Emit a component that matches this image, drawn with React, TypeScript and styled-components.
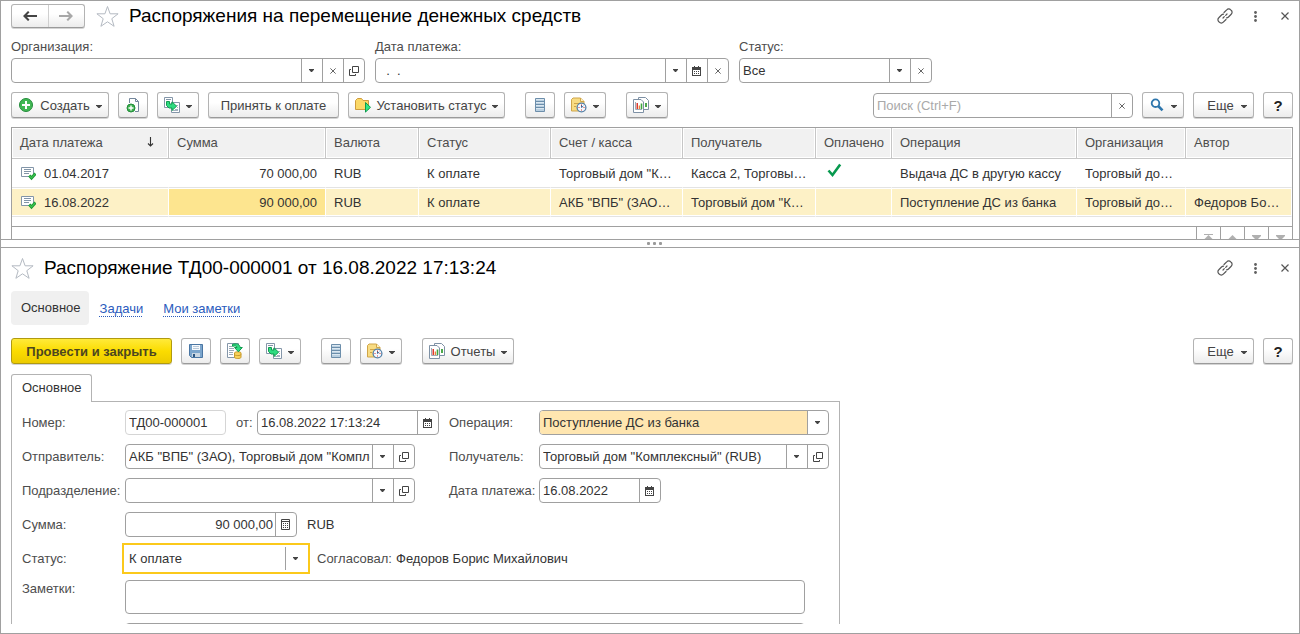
import React from "react";
import styled, { createGlobalStyle, css } from "styled-components";

const color = {
  line: "#a0a0a0",
  lineLight: "#d5d5d5",
  label: "#4d4d4d",
  text: "#333333",
  head: "#f1f1f1",
  select: "#fdf1c6",
  selectCell: "#fde58f",
  focus: "#fbc91b",
  link: "#2a5bbd",
};

const GlobalStyle = createGlobalStyle`
  *, *::before, *::after { box-sizing: border-box; }
  body { margin: 0; background: #fff; }
  body, button, input, select, textarea {
    font-family: "Liberation Sans", Arial, sans-serif;
    font-size: 13px;
    color: ${color.text};
  }
  svg { display: block; flex: none; }
`;

/* ---------- layout ---------- */

const Window = styled.div`
  display: flex;
  flex-direction: column;
  height: 100vh;
  border: 1px solid ${color.line};
  overflow: hidden;
`;

const ListPane = styled.section`
  padding: 3px 6px 0 10px;
  border-bottom: 1px solid ${color.line};
`;

const Splitter = styled.div`
  display: flex;
  align-items: center;
  justify-content: center;
  gap: 3px;
  height: 7px;
  padding-left: 9px;
  flex: none;
`;

const SplitterDot = styled.span`
  width: 3px;
  height: 3px;
  border-radius: 1px;
  background: #9a9a9a;
`;

const FormPane = styled.section`
  display: flex;
  flex-direction: column;
  flex: 1;
  min-height: 0;
  padding: 8px 6px 9px 10px;
  border-top: 1px solid ${color.line};
`;

const TitleRow = styled.header`
  display: flex;
  align-items: center;
  height: 24px;
  flex: none;
`;

const Title = styled.h1`
  flex: 1;
  margin: 0 0 0 10px;
  font-size: 19px;
  line-height: 26px;
  font-weight: 400;
  color: #000;
  white-space: nowrap;
`;

const TitleActions = styled.div`
  display: flex;
  gap: 14px;
`;

const PlainButton = styled.button`
  display: flex;
  align-items: center;
  justify-content: center;
  padding: 0;
  border: 0;
  background: none;
`;

const ActionButton = styled(PlainButton)`
  width: 16px;
  height: 16px;
`;

/* ---------- buttons ---------- */

const raised = css`
  border: 1px solid #b3b3b3;
  border-bottom-color: #9a9a9a;
  border-radius: 3px;
  background: linear-gradient(#ffffff 40%, #ececec);
  box-shadow: 0 1px 0 #d4d4d4;
`;

const NavButtons = styled.div`
  display: flex;
  width: 74px;
  height: 24px;
  margin-right: 11px;
  ${raised}
`;

const NavButton = styled(PlainButton)`
  flex: 1;
  & + & { border-left: 1px solid #cfcfcf; }
`;

const Toolbar = styled.div`
  display: flex;
  align-items: center;
  gap: 9px;
  height: 26px;
  flex: none;
`;

const Group = styled.div<{ $end?: boolean }>`
  display: flex;
  align-items: flex-end;
  gap: 9px;
  margin-right: ${(p) => (p.$end ? "0" : "11px")};
  margin-left: ${(p) => (p.$end ? "auto" : "0")};
`;

const ToolButton = styled.button<{ $width: number }>`
  display: flex;
  align-items: center;
  justify-content: space-between;
  width: ${(p) => p.$width}px;
  height: 26px;
  padding: 0 6px;
  font-size: 13px;
  color: #444;
  white-space: nowrap;
  ${raised}
`;

const ButtonText = styled.span`
  flex: 1;
  text-align: center;
`;

const PrimaryButton = styled(ToolButton)`
  border-color: #b09a10;
  background: linear-gradient(#ffea3a, #fbdc00 50%, #eccb00);
  font-weight: 700;
  color: #4c4620;
`;

const HelpButton = styled(ToolButton)`
  justify-content: center;
  font-size: 15px;
  font-weight: 700;
  color: #222;
`;

/* ---------- fields ---------- */

type FieldProps = { $width?: number; $tone?: "locked" | "filled" | "focused" };

const Field = styled.div<FieldProps>`
  display: flex;
  width: ${(p) => p.$width ?? 290}px;
  height: 25px;
  flex: none;
  border: 1px solid ${color.line};
  border-radius: 4px;
  background: #fff;
  ${(p) => p.$tone === "locked" && css`border-color: ${color.lineLight};`}
  ${(p) =>
    p.$tone === "focused" &&
    css`
      border-color: #fff;
      border-radius: 0;
      outline: 2px solid ${color.focus};
      outline-offset: 1px;
    `}
  ${(p) =>
    p.$tone === "filled" &&
    css`
      & > select { background: #ffe6b0; border-radius: 3px 0 0 3px; }
    `}
`;

const control = css`
  flex: 1;
  width: 0;
  min-width: 0;
  margin: 0;
  padding: 0 2px 0 3px;
  border: 0;
  outline: 0;
  background: none;
  color: ${color.text};
`;

const Input = styled.input<{ $right?: boolean }>`
  ${control}
  text-align: ${(p) => (p.$right ? "right" : "left")};
  &::placeholder { color: #a9a9a9; opacity: 1; }
`;

const Select = styled.select`
  ${control}
  appearance: none;
`;

const FieldButton = styled(PlainButton)`
  width: 21px;
  border-left: 1px solid ${color.line};
`;

const Filters = styled.div`
  display: flex;
  gap: 10px;
  margin: 9px 0;
`;

const Filter = styled.div`
  display: flex;
  flex-direction: column;
  gap: 1px;
`;

const Label = styled.label`
  line-height: 20px;
  color: ${color.label};
  white-space: nowrap;
`;

/* ---------- list ---------- */

const ListBox = styled.div`
  margin-top: 9px;
  border: 1px solid ${color.line};
  border-bottom: 0;
`;

const Table = styled.table`
  width: 100%;
  table-layout: fixed;
  border-collapse: separate;
  border-spacing: 0;
`;

const cell = css`
  padding: 0 8px;
  overflow: hidden;
  text-overflow: ellipsis;
  white-space: nowrap;
`;

const HeadCell = styled.th`
  ${cell}
  height: 31px;
  padding: 0 4px 2px 8px;
  border-right: 1px solid #c6c6c6;
  border-bottom: 1px solid #c6c6c6;
  background: ${color.head};
  box-shadow: inset 0 0 0 1px #fff;
  font-weight: 400;
  text-align: left;
  color: ${color.label};
  &:last-child { border-right: 0; }
`;

const SortHead = styled.span`
  display: flex;
  align-items: center;
  justify-content: space-between;
  padding-right: 10px;
`;

const Row = styled.tr<{ $selected?: boolean }>`
  background: ${(p) => (p.$selected ? color.select : "#fff")};
`;

const Cell = styled.td<{ $right?: boolean; $current?: boolean }>`
  ${cell}
  height: 29px;
  border-right: 1px solid #fff;
  border-bottom: 1px solid #e3e3e3;
  box-shadow: inset 0 1px #fff, inset 0 -1px #fff;
  text-align: ${(p) => (p.$right ? "right" : "left")};
  background: ${(p) => (p.$current ? color.selectCell : "none")};
`;

const DateCell = styled.span`
  display: flex;
  align-items: center;
  gap: 8px;
`;

const PaidMark = styled.span`
  display: block;
  padding-bottom: 6px;
`;

const ListSpace = styled.div`
  height: 10px;
  border-bottom: 1px solid ${color.line};
`;

const ListFooter = styled.div`
  display: flex;
  justify-content: flex-end;
  height: 12px;
  overflow: hidden;
`;

const ScrollButton = styled(PlainButton)`
  width: 24px;
  height: 24px;
  border-left: 1px solid ${color.line};
`;

/* ---------- form ---------- */

const Tabs = styled.nav`
  display: flex;
  align-items: center;
  gap: 20px;
  margin: 11px 0 13px;
  flex: none;
`;

const CurrentSection = styled.span`
  height: 34px;
  margin-right: -9px;
  padding: 0 8px 0 10px;
  border-radius: 4px;
  background: #f0f0f0;
  line-height: 34px;
`;

const SectionLink = styled.a`
  color: ${color.link};
  text-decoration: underline dotted 1px;
  text-underline-offset: 3px;
`;

const PageTab = styled.div`
  position: relative;
  align-self: flex-start;
  z-index: 1;
  height: 28px;
  margin: 10px 0 -1px;
  padding: 0 9px 0 10px;
  border: 1px solid #b3b3b3;
  border-bottom: 0;
  border-radius: 3px 3px 0 0;
  background: #fff;
  line-height: 26px;
  flex: none;
`;

const Page = styled.form`
  display: flex;
  flex-direction: column;
  gap: 9px;
  flex: 1;
  min-height: 0;
  max-width: 829px;
  padding: 8px 10px 0;
  border: 1px solid #b3b3b3;
  border-bottom: 0;
  overflow: hidden;
`;

const FormRow = styled.div`
  display: flex;
  flex: none;
`;

const FormLabel = styled(Label)<{ $width?: number }>`
  width: ${(p) => p.$width ?? 103}px;
  line-height: 25px;
  flex: none;
`;

const NotesLabel = styled(FormLabel)`
  line-height: 18px;
`;

const FirstColumn = styled.div`
  display: flex;
  width: 324px;
  gap: 10px;
  flex: none;
`;

const Note = styled.span`
  line-height: 25px;
  white-space: nowrap;
`;

const Notes = styled.textarea`
  width: 680px;
  height: 34px;
  padding: 3px;
  border: 1px solid ${color.line};
  border-radius: 4px;
  resize: none;
`;

/* ---------- icons ---------- */

const Caret = ({ small }: { small?: boolean }) =>
  small ? (
    <svg width="6" height="3" viewBox="0 0 6 3"><path d="M0 0h5v.8L3 3H2L0 .8z" fill="#444" /></svg>
  ) : (
    <svg width="6" height="5" viewBox="0 0 6 5"><path d="M0 2h6v.6L3.600 5H2.400L0 2.600z" fill="#444" /></svg>
  );

const Cross = ({ size = 6 }: { size?: number }) => (
  <svg width={size} height={size} viewBox="0 0 8 8">
    <path d="M.5 .5l7 7M7.500 .5l-7 7" stroke="#555" strokeWidth="1.200" fill="none" />
  </svg>
);

const OpenIcon = () => (
  <svg width="10" height="10" viewBox="0 0 10 10" fill="none" stroke="#444">
    <path d="M3.500 .5h6v6h-6zM2 3.500H.5v6h6V8" />
  </svg>
);

const CalendarIcon = () => (
  <svg width="10" height="10" viewBox="0 0 10 10">
    <path d="M0 1h2V0h1v1h3V0h1v1h2v9H0z" fill="#444" />
    <path d="M1 4h7v5H1z" fill="#fff" />
    <path d="M2 5h1v1H2zM4 5h1v1H4zM6 5h1v1H6zM2 7h1v1H2zM4 7h1v1H4zM6 7h1v1H6z" fill="#444" />
  </svg>
);

const CalculatorIcon = () => (
  <svg width="10" height="11" viewBox="0 0 10 11">
    <path d="M.5 .5h8v10h-8z" fill="#fff" stroke="#444" />
    <path d="M1 2h7v1H1zM2 4h1v1H2zM4 4h1v1H4zM6 4h1v1H6zM2 6h1v1H2zM4 6h1v1H4zM6 6h1v1H6zM2 8h1v1H2zM4 8h1v1H4zM6 8h1v1H6z" fill="#444" />
  </svg>
);

const Arrow = ({ forward }: { forward?: boolean }) => (
  <svg width="14" height="12" viewBox="0 0 14 12">
    {forward ? (
      <path d="M0 5h10L7.500 2.200 9 1l5 5-5 5-1.500-1.200L10 7H0z" fill="#a8a8a8" />
    ) : (
      <path d="M14 5H4l2.500-2.800L5 1 0 6l5 5 1.500-1.200L4 7h10z" fill="#444" />
    )}
  </svg>
);

const Star = () => (
  <svg width="23" height="23" viewBox="0 0 23 23" fill="none" stroke="#b4bac2">
    <path d="M11.500 1.500l2.600 7.300h8l-6.300 4.900 2.300 7.600-6.600-4.500-6.600 4.500 2.300-7.600L.9 8.800h8z" />
  </svg>
);

const LinkIcon = () => (
  <svg width="16" height="16" viewBox="0 0 16 16" fill="none" stroke="#555" strokeWidth="1.200" strokeLinecap="round">
    <path d="M7 4.500l2.700-2.700a2.700 2.700 0 0 1 4 0l.5.5a2.700 2.700 0 0 1 0 4l-2.700 2.700a2.700 2.700 0 0 1-2 .8" />
    <path d="M9 11.500l-2.700 2.700a2.700 2.700 0 0 1-4 0l-.5-.5a2.700 2.700 0 0 1 0-4L4.500 7a2.700 2.700 0 0 1 2-.8M6 10l1.300-1.300M8.700 7.300L10 6" />
  </svg>
);

const DotsIcon = () => (
  <svg width="3" height="11" viewBox="0 0 3 11" fill="#606060">
    <circle cx="1.500" cy="1.500" r="1.400" />
    <circle cx="1.500" cy="5.500" r="1.400" />
    <circle cx="1.500" cy="9.500" r="1.400" />
  </svg>
);

const CreateIcon = () => (
  <svg width="16" height="16" viewBox="0 0 16 16">
    <circle cx="8" cy="8" r="6.500" fill="#41b854" stroke="#238c3b" />
    <path d="M8 4v8M4 8h8" stroke="#fff" strokeWidth="2" />
  </svg>
);

const CopyIcon = () => (
  <svg width="16" height="16" viewBox="0 0 16 16">
    <path d="M4.500 1.500h6l3 3v10h-9z" fill="#fff" />
    <path d="M4.500 6V1.500h6l3 3v10H10M10.500 1.500v3h3" fill="none" stroke="#74879c" />
    <circle cx="6" cy="11" r="4" fill="#3cb14d" stroke="#238c3b" />
    <path d="M6 8.500v5M3.500 11h5" stroke="#fff" strokeWidth="1.400" />
  </svg>
);

const BasedOnIcon = () => (
  <svg width="16" height="16" viewBox="0 0 16 16">
    <path d="M.5 .5h8v10h-8z" fill="#fff" stroke="#8496a9" />
    <path d="M2 2.500h5" stroke="#8496a9" />
    <path d="M7.500 5.500h8v10h-8z" fill="#fff" stroke="#8496a9" />
    <path d="M12 8.500h2M13 10.500h1M11 12.500h3M9 13.500h5" stroke="#a3b1bf" />
    <path d="M2.500 4.500h3v2.500H8V4.800l4.600 4.400L8 13.500v-2.500H5L2.500 8.500z" fill="#2ddb80" stroke="#139c50" strokeLinejoin="round" />
  </svg>
);

const StatusIcon = () => (
  <svg width="16" height="16" viewBox="0 0 16 16">
    <path d="M.5 12.500v-9l2-2h4l1.500 2h5.500v9z" fill="#fbd866" stroke="#cf9c3c" strokeLinejoin="round" />
    <path d="M10.500 5.500l5 4.800-5 4.800z" fill="#2ee685" stroke="#0e9a4d" strokeLinejoin="round" />
  </svg>
);

const ListIcon = () => (
  <svg width="10" height="14" viewBox="0 0 10 14">
    <path d="M.5 .5h9v13h-9z" fill="#b9cfe0" stroke="#6c8eab" />
    <path d="M1 3.500h8M1 6.500h8M1 9.500h8" stroke="#6c8eab" />
    <path d="M1 1.500h8M1 4.500h8M1 7.500h8M1 10.500h8" stroke="#dce8f1" />
  </svg>
);

const ReminderIcon = () => (
  <svg width="16" height="16" viewBox="0 0 16 16">
    <path d="M.5 2.500l1.500-1.500h7.500l3.500 3.500v9.500H.5z" fill="#f8dc83" stroke="#cfa548" strokeLinejoin="round" />
    <path d="M9.500 1v3.500H13" fill="#fff3c4" stroke="#cfa548" strokeLinejoin="round" />
    <path d="M3 6.500h5M3 9.500h2" stroke="#cfa548" />
    <circle cx="10.500" cy="10.500" r="4.400" fill="#f5faff" stroke="#5580a8" strokeWidth="1.300" />
    <path d="M10.500 10.500V8M10.500 10.500l1.800-1.500" stroke="#3e6c98" />
    <path d="M7.500 10h1v1h-1zM12.500 10h1v1h-1zM10 12.500h1v1h-1zM10 7.500h1v1h-1z" fill="#d8322c" />
  </svg>
);

const ReportIcon = () => (
  <svg width="16" height="16" viewBox="0 0 16 16">
    <path d="M5.500 .5h7l3 3v9h-10z" fill="#fff" stroke="#7e91a5" />
    <path d="M12 6h2v4h-2z" fill="#4ba84a" />
    <path d="M.5 2.500h7.500l2.500 2.500v10.500H.5z" fill="#fff" stroke="#7e91a5" />
    <path d="M2.500 5v7.500H9" fill="none" stroke="#9dabb9" />
    <path d="M3.500 6H5v6H3.500z" fill="#dc3a30" />
    <path d="M5.700 8.500h1.300V12H5.700z" fill="#e8843c" />
    <path d="M7.700 6.500h1.600V12H7.700z" fill="#3fa63f" />
  </svg>
);

const SearchIcon = () => (
  <svg width="16" height="16" viewBox="0 0 16 16" fill="none" stroke="#2d76ad">
    <circle cx="6.500" cy="6.200" r="3.800" strokeWidth="1.800" />
    <path d="M9.200 9l4.300 4.300" strokeWidth="2.600" />
  </svg>
);

const SaveIcon = () => (
  <svg width="14" height="14" viewBox="0 0 14 14">
    <path d="M.5 .5h13v13h-11l-2-2z" fill="#7ba5cc" stroke="#4a76a3" />
    <path d="M3 1h8v5H3z" fill="#f6f9fc" />
    <path d="M4 2.500h6M4 4.500h6" stroke="#b8c8d8" />
    <path d="M3 9h8v4H3z" fill="#c9d6e2" />
    <path d="M4 10h2v3H4z" fill="#2c5580" />
  </svg>
);

const PostIcon = () => (
  <svg width="16" height="16" viewBox="0 0 16 16">
    <path d="M.5 .5h11v14H.5z" fill="#fff" stroke="#8496a9" />
    <path d="M2 3.500h3M2 5.500h5M2 7.500h5M2 9.500h4M2 11.500h4" stroke="#9aa9b8" />
    <path d="M7.500 10c0-1.600 6.500-1.600 6.500 0v4.300c0 1.600-6.500 1.600-6.500 0z" fill="#f9d25a" stroke="#c79a2d" />
    <path d="M7.500 11.500c0 1.400 6.500 1.400 6.500 0" fill="none" stroke="#c79a2d" />
    <path d="M5.500 1.300C9.500 .3 12.800 1 13 4.500h2.300l-3.900 4.300L7.500 4.500H10c0-1.400-1.600-1.900-4.500-1.200z" fill="#2edc80" stroke="#0e9a4d" strokeLinejoin="round" />
  </svg>
);

const PostedIcon = () => (
  <svg width="16" height="16" viewBox="0 0 16 16">
    <path d="M1.500 2.500h12v9h-12z" fill="#fff" stroke="#8295a8" />
    <path d="M4 4.500h7M4 6.500h7M4 8.500h5" stroke="#8295a8" />
    <path d="M9.300 10.500l2.200 2.500 4-4.500" fill="none" stroke="#1b9a35" strokeWidth="3" />
    <path d="M9.500 10.800l2 2 3.600-4" fill="none" stroke="#3fc450" strokeWidth="1.200" />
  </svg>
);

const PaidIcon = () => (
  <svg width="18" height="18" viewBox="0 0 18 18">
    <path d="M4.500 9.500l4 4.500 7.700-10.500" fill="none" stroke="#07994e" strokeWidth="2.600" />
  </svg>
);

const SortIcon = () => (
  <svg width="7" height="10" viewBox="0 0 7 10" fill="none" stroke="#333">
    <path d="M3.500 0v9M1 6.500l2.500 2.500L6 6.500" strokeWidth="1.100" />
  </svg>
);

const ScrollIcon = ({ up, edge }: { up?: boolean; edge?: boolean }) => (
  <svg width="11" height="10" viewBox="0 0 11 10" fill="#b0b0b0">
    {edge && up && <path d="M1 0h9v1H1z" />}
    {up ? <path d="M5.500 1l5 5h-10z" /> : <path d="M1 1h9v1L5.500 6.500 1 2z" />}
    {edge && !up && <path d="M1 8h9v1H1z" />}
  </svg>
);

/* ---------- parts ---------- */

const WindowActions = () => (
  <TitleActions>
    <ActionButton aria-label="Получить ссылку"><LinkIcon /></ActionButton>
    <ActionButton aria-label="Меню"><DotsIcon /></ActionButton>
    <ActionButton aria-label="Закрыть"><Cross size={8} /></ActionButton>
  </TitleActions>
);

const DropButton = () => <FieldButton type="button" aria-label="Выбрать из списка"><Caret small /></FieldButton>;
const ClearButton = () => <FieldButton type="button" aria-label="Очистить"><Cross /></FieldButton>;
const OpenButton = () => <FieldButton type="button" aria-label="Открыть"><OpenIcon /></FieldButton>;
const CalendarButton = () => <FieldButton type="button" aria-label="Календарь"><CalendarIcon /></FieldButton>;

const columns: [string, number?][] = [
  ["Дата платежа", 157],
  ["Сумма", 157],
  ["Валюта", 93],
  ["Статус", 132],
  ["Счет / касса", 132],
  ["Получатель", 133],
  ["Оплачено", 76],
  ["Операция", 185],
  ["Организация", 109],
  ["Автор"],
];

const orders = [
  {
    date: "01.04.2017", sum: "70 000,00", currency: "RUB", status: "К оплате",
    account: 'Торговый дом "К…', receiver: "Касса 2, Торговы…", paid: true,
    operation: "Выдача ДС в другую кассу", company: "Торговый до…", author: "",
  },
  {
    date: "16.08.2022", sum: "90 000,00", currency: "RUB", status: "К оплате",
    account: 'АКБ "ВПБ" (ЗАО…', receiver: 'Торговый дом "К…', paid: false,
    operation: "Поступление ДС из банка", company: "Торговый до…", author: "Федоров Бо…",
    selected: true,
  },
];

const OrderTable = () => (
  <Table>
    <colgroup>
      {columns.map(([name, width]) => <col key={name} width={width} />)}
    </colgroup>
    <thead>
      <tr>
        {columns.map(([name], i) => (
          <HeadCell key={name} scope="col">
            {i === 0 ? <SortHead>{name}<SortIcon /></SortHead> : name}
          </HeadCell>
        ))}
      </tr>
    </thead>
    <tbody>
      {orders.map((o) => (
        <Row key={o.date} $selected={o.selected}>
          <Cell><DateCell><PostedIcon />{o.date}</DateCell></Cell>
          <Cell $right $current={o.selected}>{o.sum}</Cell>
          <Cell>{o.currency}</Cell>
          <Cell>{o.status}</Cell>
          <Cell>{o.account}</Cell>
          <Cell>{o.receiver}</Cell>
          <Cell>{o.paid && <PaidMark><PaidIcon /></PaidMark>}</Cell>
          <Cell>{o.operation}</Cell>
          <Cell>{o.company}</Cell>
          <Cell>{o.author}</Cell>
        </Row>
      ))}
    </tbody>
  </Table>
);

const OrderList = () => (
  <ListPane>
    <TitleRow>
      <NavButtons>
        <NavButton aria-label="Назад"><Arrow /></NavButton>
        <NavButton aria-label="Вперед"><Arrow forward /></NavButton>
      </NavButtons>
      <PlainButton aria-label="В избранное"><Star /></PlainButton>
      <Title>Распоряжения на перемещение денежных средств</Title>
      <WindowActions />
    </TitleRow>

    <Filters>
      <Filter>
        <Label htmlFor="f-company">Организация:</Label>
        <Field $width={354}>
          <Input id="f-company" />
          <DropButton /><ClearButton /><OpenButton />
        </Field>
      </Filter>
      <Filter>
        <Label htmlFor="f-date">Дата платежа:</Label>
        <Field $width={354}>
          <Input id="f-date" defaultValue="  .  .    " />
          <DropButton /><CalendarButton /><ClearButton />
        </Field>
      </Filter>
      <Filter>
        <Label htmlFor="f-status">Статус:</Label>
        <Field $width={193}>
          <Select id="f-status"><option>Все</option></Select>
          <DropButton /><ClearButton />
        </Field>
      </Filter>
    </Filters>

    <Toolbar>
      <Group>
        <ToolButton $width={98}><CreateIcon /><ButtonText>Создать</ButtonText><Caret /></ToolButton>
        <HelpButton $width={30} aria-label="Скопировать"><CopyIcon /></HelpButton>
        <ToolButton $width={42} aria-label="Создать на основании"><BasedOnIcon /><Caret /></ToolButton>
        <ToolButton $width={131}><ButtonText>Принять к оплате</ButtonText></ToolButton>
        <ToolButton $width={157}><StatusIcon /><ButtonText>Установить статус</ButtonText><Caret /></ToolButton>
      </Group>
      <Group>
        <HelpButton $width={30} aria-label="Реестр"><ListIcon /></HelpButton>
        <ToolButton $width={42} aria-label="Напоминания"><ReminderIcon /><Caret /></ToolButton>
      </Group>
      <ToolButton $width={42} aria-label="Отчеты"><ReportIcon /><Caret /></ToolButton>
      <Group $end>
        <Field $width={260}>
          <Input placeholder="Поиск (Ctrl+F)" aria-label="Поиск" />
          <ClearButton />
        </Field>
        <ToolButton $width={42} aria-label="Найти"><SearchIcon /><Caret /></ToolButton>
        <ToolButton $width={61}><ButtonText>Еще</ButtonText><Caret /></ToolButton>
        <HelpButton $width={30}>?</HelpButton>
      </Group>
    </Toolbar>

    <ListBox>
      <OrderTable />
      <ListSpace />
      <ListFooter>
        <ScrollButton aria-label="В начало"><ScrollIcon up edge /></ScrollButton>
        <ScrollButton aria-label="Вверх"><ScrollIcon up /></ScrollButton>
        <ScrollButton aria-label="Вниз"><ScrollIcon /></ScrollButton>
        <ScrollButton aria-label="В конец"><ScrollIcon edge /></ScrollButton>
      </ListFooter>
    </ListBox>
  </ListPane>
);

const OrderForm = () => (
  <FormPane>
    <TitleRow>
      <PlainButton aria-label="В избранное"><Star /></PlainButton>
      <Title as="h2">Распоряжение ТД00-000001 от 16.08.2022 17:13:24</Title>
      <WindowActions />
    </TitleRow>

    <Tabs>
      <CurrentSection>Основное</CurrentSection>
      <SectionLink href="#tasks">Задачи</SectionLink>
      <SectionLink href="#notes">Мои заметки</SectionLink>
    </Tabs>

    <Toolbar>
      <Group>
        <PrimaryButton $width={161}><ButtonText>Провести и закрыть</ButtonText></PrimaryButton>
        <HelpButton $width={30} aria-label="Записать"><SaveIcon /></HelpButton>
        <HelpButton $width={30} aria-label="Провести"><PostIcon /></HelpButton>
        <ToolButton $width={42} aria-label="Создать на основании"><BasedOnIcon /><Caret /></ToolButton>
      </Group>
      <Group>
        <HelpButton $width={30} aria-label="Реестр"><ListIcon /></HelpButton>
        <ToolButton $width={42} aria-label="Напоминания"><ReminderIcon /><Caret /></ToolButton>
      </Group>
      <ToolButton $width={92}><ReportIcon /><ButtonText>Отчеты</ButtonText><Caret /></ToolButton>
      <Group $end>
        <ToolButton $width={61}><ButtonText>Еще</ButtonText><Caret /></ToolButton>
        <HelpButton $width={30}>?</HelpButton>
      </Group>
    </Toolbar>

    <PageTab>Основное</PageTab>
    <Page>
      <FormRow>
        <FormLabel htmlFor="number">Номер:</FormLabel>
        <FirstColumn>
          <Field $width={101} $tone="locked"><Input id="number" defaultValue="ТД00-000001" /></Field>
          <FormLabel htmlFor="date" $width={11}>от:</FormLabel>
          <Field $width={182}><Input id="date" defaultValue="16.08.2022 17:13:24" /><CalendarButton /></Field>
        </FirstColumn>
        <FormLabel htmlFor="operation" $width={90}>Операция:</FormLabel>
        <Field $tone="filled">
          <Select id="operation"><option>Поступление ДС из банка</option></Select>
          <DropButton />
        </Field>
      </FormRow>

      <FormRow>
        <FormLabel htmlFor="sender">Отправитель:</FormLabel>
        <FirstColumn>
          <Field>
            <Input id="sender" defaultValue={'АКБ "ВПБ" (ЗАО), Торговый дом "Комплексный"'} />
            <DropButton /><OpenButton />
          </Field>
        </FirstColumn>
        <FormLabel htmlFor="receiver" $width={90}>Получатель:</FormLabel>
        <Field>
          <Input id="receiver" defaultValue={'Торговый дом "Комплексный" (RUB)'} />
          <DropButton /><OpenButton />
        </Field>
      </FormRow>

      <FormRow>
        <FormLabel htmlFor="department">Подразделение:</FormLabel>
        <FirstColumn>
          <Field><Input id="department" /><DropButton /><OpenButton /></Field>
        </FirstColumn>
        <FormLabel htmlFor="paydate" $width={90}>Дата платежа:</FormLabel>
        <Field $width={122}><Input id="paydate" defaultValue="16.08.2022" /><CalendarButton /></Field>
      </FormRow>

      <FormRow>
        <FormLabel htmlFor="sum">Сумма:</FormLabel>
        <FirstColumn>
          <Field $width={172}>
            <Input id="sum" $right defaultValue="90 000,00" />
            <FieldButton type="button" aria-label="Калькулятор"><CalculatorIcon /></FieldButton>
          </Field>
          <Note>RUB</Note>
        </FirstColumn>
      </FormRow>

      <FormRow>
        <FormLabel htmlFor="status">Статус:</FormLabel>
        <FirstColumn>
          <Field $width={182} $tone="focused">
            <Select id="status"><option>К оплате</option></Select>
            <DropButton />
          </Field>
          <FormLabel as="span" $width={69}>Согласовал:</FormLabel>
          <Note>Федоров Борис Михайлович</Note>
        </FirstColumn>
      </FormRow>

      <FormRow>
        <NotesLabel htmlFor="notes">Заметки:</NotesLabel>
        <Notes id="notes" />
      </FormRow>

      <FormRow>
        <FormLabel as="span" />
        <Notes aria-label="Дополнительно" />
      </FormRow>
    </Page>
  </FormPane>
);

export default function App() {
  return (
    <>
      <GlobalStyle />
      <Window>
        <OrderList />
        <Splitter><SplitterDot /><SplitterDot /><SplitterDot /></Splitter>
        <OrderForm />
      </Window>
    </>
  );
}
